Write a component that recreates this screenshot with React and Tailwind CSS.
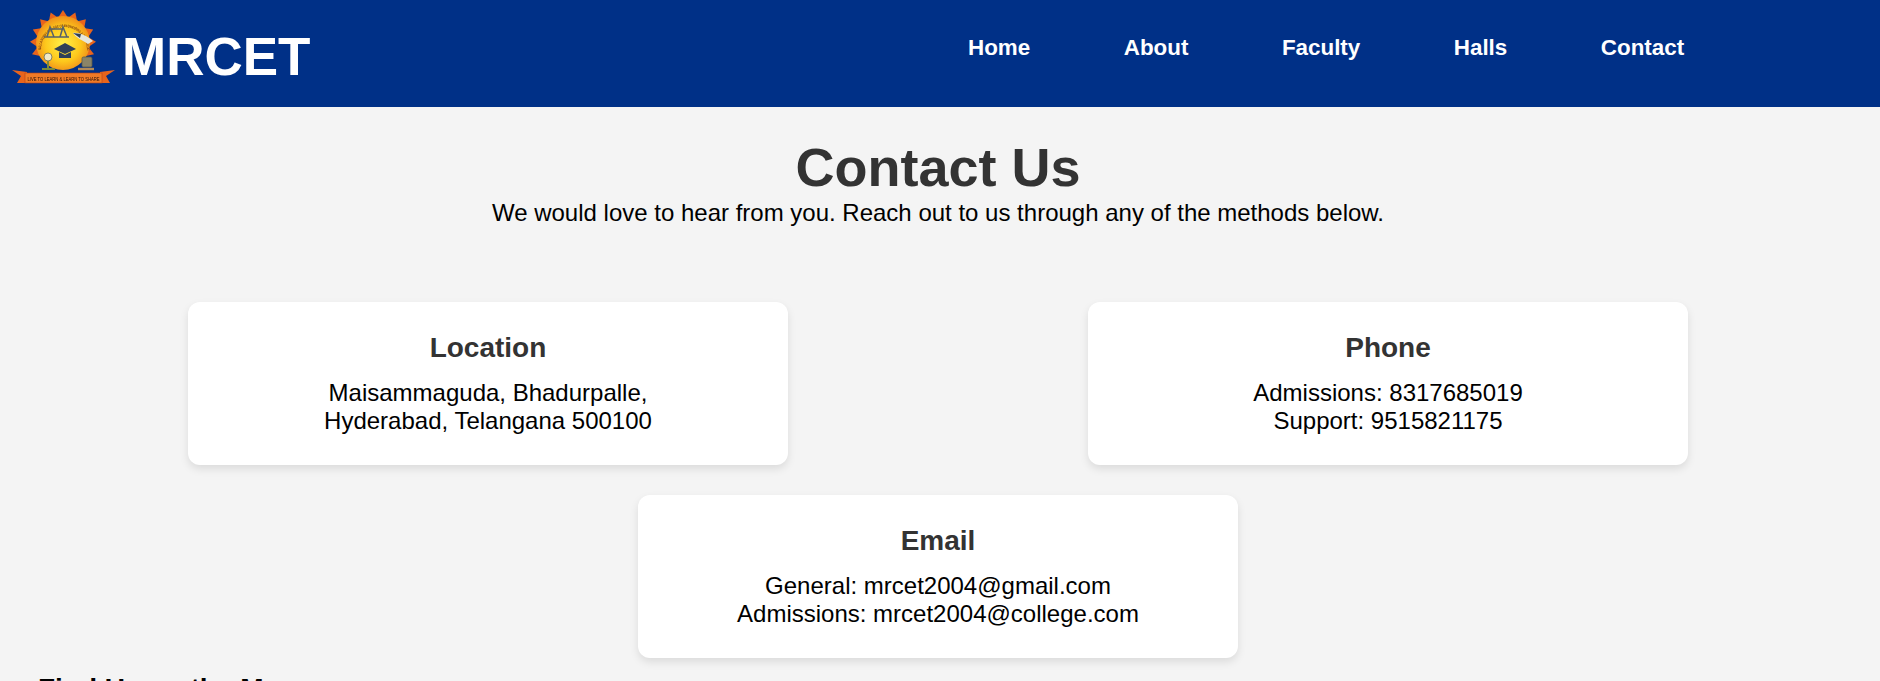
const navLinks = ['Home', 'About', 'Faculty', 'Halls', 'Contact']

const contactCards = [
  { title: 'Location', lines: ['Maisammaguda, Bhadurpalle,', 'Hyderabad, Telangana 500100'] },
  { title: 'Phone', lines: ['Admissions: 8317685019', 'Support: 9515821175'] },
  { title: 'Email', lines: ['General: mrcet2004@gmail.com', 'Admissions: mrcet2004@college.com'] },
]

const spikes = [-110, -88, -66, -44, -22, 0, 22, 44, 66, 88, 110]

function Logo() {
  return (
    <svg width="106" height="76" viewBox="0 0 106 76" className="shrink-0 blur-[0.4px]">
      <defs>
        <radialGradient id="sun" cx="50%" cy="52%" r="52%">
          <stop offset="0%" stopColor="#fff04a" />
          <stop offset="62%" stopColor="#fdc81c" />
          <stop offset="100%" stopColor="#f0901a" />
        </radialGradient>
        <path id="ring" d="M31 40 A23 23 0 1 1 77 40" />
      </defs>
      {spikes.map((a) => (
        <polygon key={a} points="48.5,7 57.5,7 53,0" fill="#e8641c" transform={`rotate(${a} 53 33)`} />
      ))}
      <circle cx="53" cy="33" r="27" fill="url(#sun)" />
      <text fontSize="3.8" fontWeight="700" fill="#7a3a10" className="font-['Liberation_Sans',sans-serif]">
        <textPath href="#ring" textLength="74" lengthAdjust="spacingAndGlyphs">MALLA REDDY COLLEGE OF ENGINEERING &amp; TECHNOLOGY</textPath>
      </text>
      <path d="M37 27 L40 17 L44 27 M50 27 L53 17 L57 27 M40 19 H53 M34 27 H59" stroke="#56606a" strokeWidth="1.5" fill="none" />
      <path d="M63 23 C68 22 76 25 83 31 L78 34 C72 30 66 28 63 23 Z" fill="#e6e6dc" />
      <path d="M63 23 L71 24 L70 28 Z" fill="#2f4058" />
      <path d="M44 39 L55 33 L66 39 L55 44 Z" fill="#2f4058" />
      <path d="M49 42 V48 H61 V42 L55 45 Z" fill="#2f4058" />
      <circle cx="38" cy="47" r="4" fill="#efe9c8" stroke="#6a6a50" strokeWidth="0.8" />
      <path d="M38 51 V58 M32 59 H45" stroke="#7a8a3a" strokeWidth="2" />
      <rect x="72" y="47" width="10" height="10" rx="1.5" fill="#8a8468" stroke="#5a5a4a" strokeWidth="0.8" />
      <path d="M68 59 H84" stroke="#b08a5a" strokeWidth="2.4" />
      <polygon points="2,60 17,62 17,73 7,73 11,66" fill="#e8641c" />
      <polygon points="105,60 90,62 90,73 100,73 96,66" fill="#e8641c" />
      <rect x="15" y="63" width="77" height="10" fill="#f07a26" stroke="#b6411a" strokeWidth="0.6" />
      <text x="53.5" y="70.5" textAnchor="middle" fontSize="6" fill="#2a1008" textLength="72" lengthAdjust="spacingAndGlyphs" className="font-['Liberation_Sans',sans-serif]">
        LIVE TO LEARN &amp; LEARN TO SHARE
      </text>
    </svg>
  )
}

export default function App() {
  return (
    <div className="h-[681px] overflow-hidden bg-[#f4f4f4] font-['Liberation_Sans',Arial,sans-serif] text-black">
      <header className="flex h-[107px] items-start bg-[#003087] pl-[10px]">
        <div className="mt-[10px]">
          <Logo />
        </div>
        <span className="ml-[6px] mt-[30px] w-[190px] text-[53px] font-bold leading-[53px] text-white">MRCET</span>
        <nav className="ml-[656px] mt-[34px] flex gap-[93.5px]">
          {navLinks.map((link) => (
            <a key={link} href="#" className="text-[22.4px] font-bold leading-[28px] text-white">
              {link}
            </a>
          ))}
        </nav>
      </header>

      <main className="w-[1876px]">
        <section className="pt-[29px] text-center">
          <h1 className="text-[54px] font-bold leading-[62px] text-[#333]">Contact Us</h1>
          <p className="mt-[1px] text-[24px] leading-[28px]">We would love to hear from you. Reach out to us through any of the methods below.</p>
        </section>

        <section className="mt-[75px] flex flex-wrap justify-center gap-x-[300px] gap-y-[30px]">
          {contactCards.map((card) => (
            <div key={card.title} className="h-[163px] w-[600px] rounded-[12px] bg-white pt-[30px] text-center shadow-[0_4px_8px_rgba(0,0,0,0.1)]">
              <h3 className="mb-[15px] text-[28px] font-bold leading-[32px] text-[#333]">{card.title}</h3>
              {card.lines.map((line) => (
                <p key={line} className="text-[24px] leading-[28px]">{line}</p>
              ))}
            </div>
          ))}
        </section>

        <h2 className="mt-[15px] pl-[38px] text-[28px] font-bold leading-[32px]">Find Us on the Map</h2>
      </main>
    </div>
  )
}
